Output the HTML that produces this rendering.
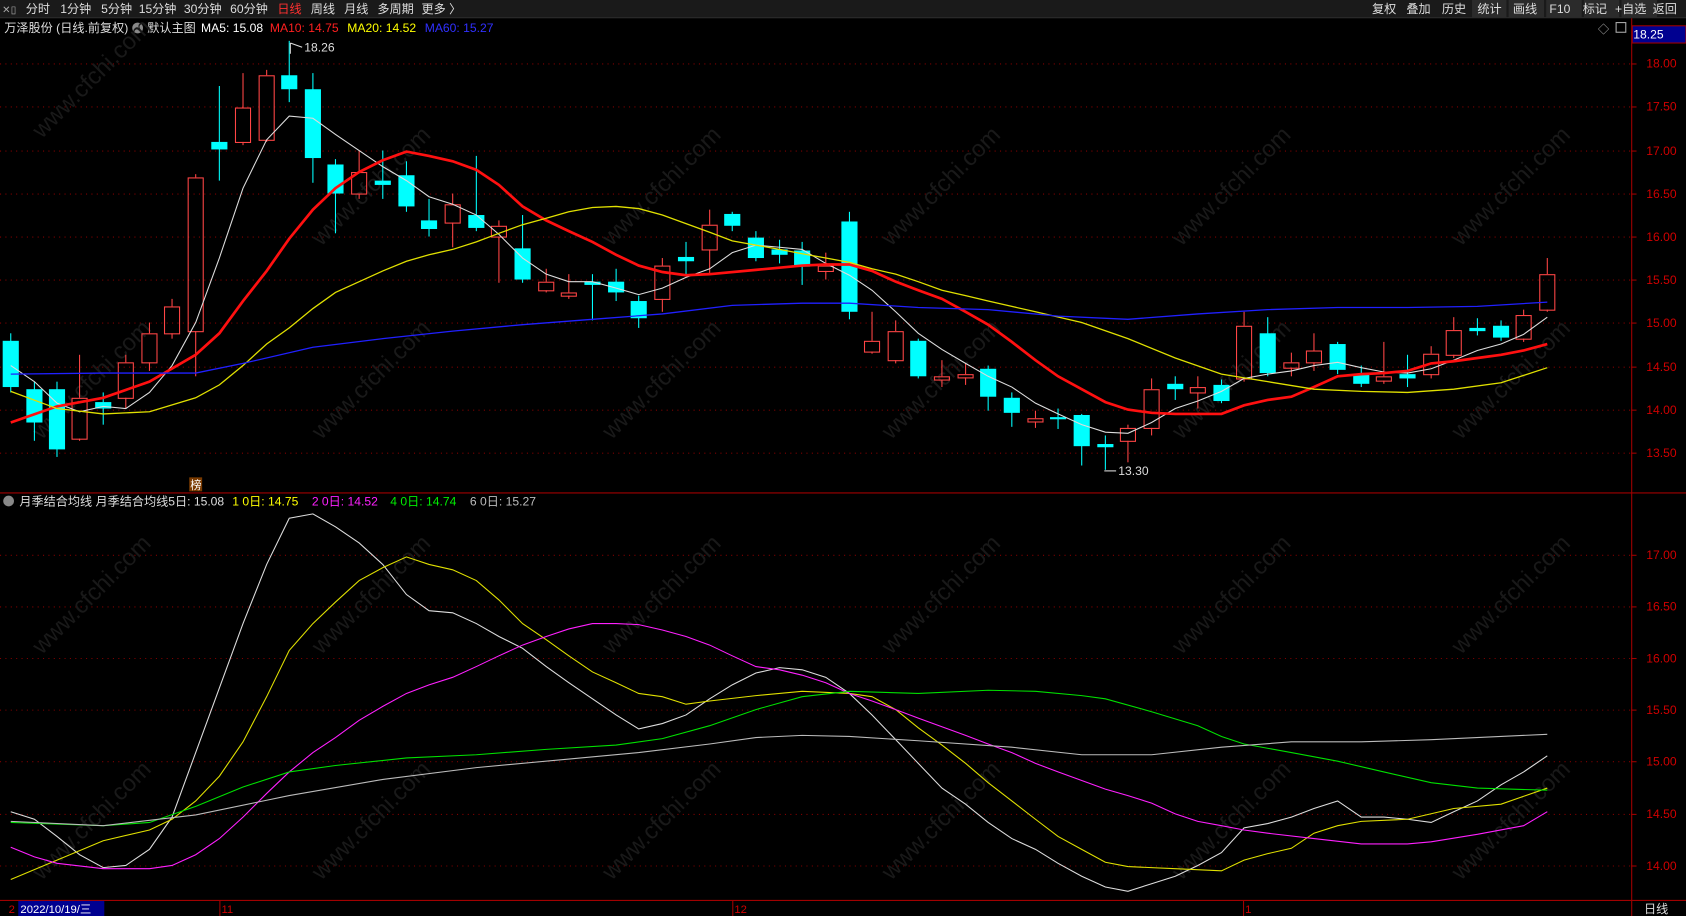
<!DOCTYPE html>
<html><head><meta charset="utf-8">
<style>
html,body{margin:0;padding:0;background:#000;width:1686px;height:916px;overflow:hidden}
svg{display:block}
text{font-family:"Liberation Sans","Noto Sans CJK SC",sans-serif}
</style></head><body>
<svg id="s" width="1686" height="916" viewBox="0 0 1568 852" preserveAspectRatio="none" xmlns="http://www.w3.org/2000/svg">
<rect width="1568" height="852" fill="#000"/>
<rect x="0" y="0" width="1568" height="16" fill="#1a1a1a"/>
<line x1="0" y1="16.5" x2="1568" y2="16.5" stroke="#333"/>
<g font-size="11.3" fill="#ddd">
<text x="2" y="12" fill="#aaa" font-size="9.5">✕▯</text>
<text x="24" y="12">分时</text><text x="56" y="12">1分钟</text><text x="94" y="12">5分钟</text>
<text x="129" y="12">15分钟</text><text x="171" y="12">30分钟</text><text x="214" y="12">60分钟</text>
<text x="258" y="12" fill="#ff3030">日线</text><text x="289" y="12">周线</text><text x="320" y="12">月线</text>
<text x="351" y="12">多周期</text><text x="392" y="12">更多 〉</text>
</g>
<g fill="#2b2b2b">
<rect x="1369" y="0" width="32" height="16"/><rect x="1403" y="0" width="33" height="16"/><rect x="1438" y="0" width="33" height="16"/>
<rect x="1473" y="0" width="33" height="16"/><rect x="1508" y="0" width="33" height="16"/>
</g>
<g font-size="11.3" fill="#ddd">
<text x="1276" y="12">复权</text><text x="1308" y="12">叠加</text><text x="1341" y="12">历史</text><text x="1374" y="12">统计</text>
<text x="1407" y="12">画线</text><text x="1441" y="12">F10</text><text x="1472" y="12">标记</text><text x="1502" y="12">+自选</text><text x="1537" y="12">返回</text>
</g>
<g font-size="11.3">
<text x="4" y="30" fill="#ddd">万泽股份 (日线.前复权)</text>
<circle cx="128" cy="26" r="5" fill="#888"/>
<text x="137" y="30" fill="#ddd">默认主图</text>
<text x="187" y="30" fill="#fff">MA5: 15.08</text>
<text x="251" y="30" fill="#ff2020">MA10: 14.75</text>
<text x="323" y="30" fill="#ffff00">MA20: 14.52</text>
<text x="395" y="30" fill="#3030ff">MA60: 15.27</text>
</g>
<text x="1486" y="31" font-size="10.5" fill="#aaa">◇</text>
<rect x="1503" y="21" width="9" height="9" fill="none" stroke="#aaa"/>
<line x1="1517.5" y1="17" x2="1517.5" y2="838" stroke="#a00000"/>
<line x1="0" y1="458.5" x2="1568" y2="458.5" stroke="#a00000"/>
<line x1="0" y1="837.5" x2="1568" y2="837.5" stroke="#a00000"/>
<rect x="1518" y="24" width="50" height="16" fill="#000090" stroke="#a00000"/>
<text x="1519" y="36" font-size="11.3" fill="#fff">18.25</text>
<g id="grid" stroke="#800000" stroke-dasharray="1,4"></g>
<g id="labels" font-size="11.3" fill="#d00000"></g>
<g id="wm" font-size="22" fill="#191919"></g>
<g id="cd"></g>
<g id="ln" fill="none"></g>
<text x="283" y="48" font-size="11.3" fill="#ddd">18.26</text>
<path d="M270 40 L270 50 M270 40 L281 44" stroke="#ddd" fill="none"/>
<text x="1040" y="442" font-size="11.3" fill="#ddd">13.30</text>
<path d="M1027 438 L1038 438" stroke="#ddd"/>
<rect x="176" y="444" width="12" height="13" fill="#7a3a00"/>
<text x="177" y="455" font-size="10.5" fill="#fff">榜</text>
<g font-size="11.3">
<circle cx="8" cy="466" r="5" fill="#888"/>
<text x="18" y="470" fill="#ddd">月季结合均线 月季结合均线5日: 15.08</text>
<text x="216" y="470" fill="#ffff00">1 0日: 14.75</text>
<text x="290" y="470" fill="#ff20ff">2 0日: 14.52</text>
<text x="363" y="470" fill="#00ee00">4 0日: 14.74</text>
<text x="437" y="470" fill="#bbb">6 0日: 15.27</text>
</g>
<rect x="17" y="838" width="80" height="14" fill="#000090"/>
<text x="8" y="849" font-size="10.5" fill="#d00000">2</text>
<text x="19" y="849" font-size="10.5" fill="#fff">2022/10/19/三</text>
<text x="206" y="849" font-size="10.5" fill="#d00000">11</text>
<text x="683" y="849" font-size="10.5" fill="#d00000">12</text>
<text x="1158" y="849" font-size="10.5" fill="#d00000">1</text>
<line x1="204.5" y1="838" x2="204.5" y2="852" stroke="#a00000"/>
<line x1="681.5" y1="838" x2="681.5" y2="852" stroke="#a00000"/>
<line x1="1156.5" y1="838" x2="1156.5" y2="852" stroke="#a00000"/>
<line x1="1517.5" y1="838" x2="1517.5" y2="852" stroke="#a00000"/>
<text x="1529" y="849" font-size="11.3" fill="#ddd">日线</text>
</svg>
<script>
var NS="http://www.w3.org/2000/svg";
function el(p,t,a,txt){var e=document.createElementNS(NS,t);for(var k in a)e.setAttribute(k,a[k]);if(txt)e.textContent=txt;document.getElementById(p).appendChild(e);return e;}
var mg=[[59,"18.00"],[99,"17.50"],[140,"17.00"],[180,"16.50"],[220,"16.00"],[260,"15.50"],[300,"15.00"],[341,"14.50"],[381,"14.00"],[421,"13.50"]];
var lg=[[516,"17.00"],[564,"16.50"],[612,"16.00"],[660,"15.50"],[708,"15.00"],[757,"14.50"],[805,"14.00"]];
mg.concat(lg).forEach(function(g){el("grid","line",{x1:0,x2:1517,y1:g[0]+.5,y2:g[0]+.5});el("labels","text",{x:1531,y:g[0]+4},g[1]);el("grid","line",{x1:1517,x2:1522,y1:g[0]+.5,y2:g[0]+.5,"stroke-dasharray":"none","stroke":"#a00000"});});
[[0,80],[260,180],[530,180],[790,180],[1060,180],[1320,180],[0,360],[260,360],[530,360],[790,360],[1060,360],[1320,360],[0,560],[260,560],[530,560],[790,560],[1060,560],[1320,560],[0,770],[260,770],[530,770],[790,770],[1060,770],[1320,770]].forEach(function(p){el("wm","text",{x:p[0]+10,y:p[1]+20,transform:"rotate(-45 "+(p[0]+60)+" "+p[1]+")"},"www.cfchi.com");});
var C=[[10,0,317,360,310,365],[32,0,362,393,355,410],[53,0,362,418,355,425],[74,1,370,408,330,410],[96,0,374,380,365,395],[117,1,337,370,330,380],[139,1,310,337,300,345],[160,1,285,310,278,315],[182,1,165,308,162,350],[204,0,132,139,80,168],[226,1,100,132,68,135],[248,1,70,130,65,132],[269,0,70,83,38,95],[291,0,83,147,68,170],[312,0,153,180,148,217],[334,1,160,180,140,185],[356,0,168,172,140,185],[378,0,163,192,150,197],[399,0,205,213,185,220],[421,1,190,207,180,230],[443,0,200,212,145,215],[464,1,210,220,205,263],[486,0,231,260,200,263],[508,1,262,270,250,272],[529,1,272,275,255,278],[551,0,262,265,255,298],[573,0,262,272,250,280],[594,0,280,296,275,305],[616,1,247,278,240,290],[638,0,239,243,225,256],[660,1,209,232,195,255],[681,0,199,210,197,215],[703,0,221,240,215,243],[725,0,232,237,223,245],[746,0,233,248,225,265],[768,1,247,252,235,260],[790,0,206,290,197,297],[811,1,317,327,290,329],[833,1,308,335,298,338],[854,0,317,350,315,352],[876,1,350,353,335,360],[898,1,348,351,338,358],[919,0,343,369,340,382],[941,0,370,384,365,397],[963,1,389,392,382,398],[984,0,388,390,380,399],[1006,0,386,415,385,433],[1028,0,413,416,405,437],[1049,1,398,410,395,430],[1071,1,362,398,352,405],[1093,0,357,362,350,372],[1114,1,360,365,350,380],[1136,0,358,373,353,375],[1157,1,303,352,290,355],[1179,0,310,347,295,350],[1201,1,337,342,328,350],[1222,1,326,337,310,345],[1244,0,320,344,318,348],[1266,0,348,357,340,360],[1287,1,350,354,318,357],[1309,0,348,352,330,360],[1331,1,329,348,322,352],[1352,1,307,330,295,333],[1374,0,305,308,296,312],[1396,0,303,314,298,317],[1417,1,293,315,288,318],[1439,1,255,288,240,290]];
C.forEach(function(c){var x=c[0],w=7.5;if(c[1]){el("cd","line",{x1:x,x2:x,y1:c[4],y2:c[2],stroke:"#ff4545"});el("cd","line",{x1:x,x2:x,y1:c[3],y2:c[5],stroke:"#ff4545"});el("cd","rect",{x:x-w+.5,y:c[2]+.5,width:2*w-1,height:Math.max(c[3]-c[2],1),fill:"none",stroke:"#ff4545"});}else{el("cd","line",{x1:x,x2:x,y1:c[4],y2:c[5],stroke:"#00ffff"});el("cd","rect",{x:x-w,y:c[2],width:2*w,height:Math.max(c[3]-c[2],2),fill:"#00ffff"});}});
function L(col,w,pts){el("ln","polyline",{points:pts,stroke:col,"stroke-width":w});}
L("#ddd",1,"10,340 32,355 53,375 74,383 96,378 117,380 139,365 160,340 182,300 204,240 226,175 248,130 269,108 291,110 312,125 334,140 356,155 378,168 399,183 421,190 443,200 464,218 486,240 508,255 529,262 551,262 573,268 594,274 616,268 638,258 660,250 681,235 703,228 725,230 746,232 768,245 790,256 811,270 833,290 854,310 876,325 898,338 919,350 941,360 963,375 984,385 1006,395 1028,402 1049,403 1071,393 1093,380 1114,373 1136,364 1157,352 1179,348 1201,345 1222,340 1244,337 1266,342 1287,346 1309,347 1331,343 1352,335 1374,326 1396,320 1417,311 1439,295");
L("#ff1010",2.5,"10,393 53,378 96,370 139,355 182,330 204,310 226,280 248,252 269,222 291,195 312,175 334,160 356,149 378,141 399,145 421,150 443,158 464,172 486,192 508,205 529,215 551,225 573,237 594,247 616,253 638,256 660,255 703,251 746,247 768,246 790,246 811,252 833,262 854,270 876,278 898,290 919,302 941,318 963,335 984,350 1006,362 1028,374 1049,381 1071,384 1093,385 1114,385 1136,385 1157,377 1179,372 1201,369 1222,360 1244,350 1266,348 1287,347 1309,345 1331,338 1352,336 1374,333 1396,330 1417,326 1439,320");
L("#e0e000",1.2,"10,364 53,380 96,385 139,383 182,370 204,358 226,340 248,320 269,305 291,287 312,272 334,262 356,252 378,243 399,237 421,232 443,225 464,217 486,209 508,203 529,197 551,193 573,192 594,194 616,200 638,208 660,216 681,224 703,228 725,232 746,236 768,240 790,244 811,250 833,255 854,262 876,270 898,275 919,280 941,285 963,290 1006,300 1049,315 1093,333 1136,348 1179,355 1222,362 1266,364 1309,365 1352,362 1396,356 1439,342");
L("#2020ff",1.2,"10,348 96,347 182,347 226,338 291,323 356,315 421,308 486,302 551,297 616,292 681,284 746,282 790,282 854,286 919,288 984,294 1049,297 1114,292 1179,288 1244,286 1309,286 1374,285 1439,281");
L("#ddd",1,"10,755 32,762 53,778 74,795 96,807 117,805 139,790 160,760 182,700 204,640 226,580 248,525 269,482 291,478 312,490 334,505 356,525 378,553 399,568 421,570 443,580 464,592 486,603 508,620 529,635 551,650 573,665 594,678 616,673 638,665 660,650 681,637 703,626 725,621 746,623 768,630 790,645 811,665 833,688 854,710 876,733 898,748 919,765 941,780 963,790 984,803 1006,815 1028,825 1049,829 1071,822 1093,815 1114,805 1136,793 1157,770 1179,766 1201,760 1222,752 1244,745 1266,760 1287,760 1309,762 1331,765 1352,755 1374,745 1396,730 1417,718 1439,703");
L("#e0e000",1,"10,818 53,800 96,782 139,772 160,762 182,745 204,722 226,690 248,648 269,605 291,580 312,560 334,540 356,528 378,518 399,525 421,530 443,540 464,558 486,580 508,595 529,610 551,625 573,635 594,645 616,648 638,655 660,652 703,647 746,643 790,645 811,648 833,660 854,677 876,693 898,710 919,728 941,745 963,762 984,778 1006,790 1028,802 1049,806 1093,808 1136,810 1157,800 1179,794 1201,789 1222,775 1244,768 1266,764 1309,762 1352,752 1396,748 1439,733");
L("#ff20ff",1,"10,788 32,797 53,803 96,808 139,808 160,805 182,795 204,780 226,760 248,738 269,718 291,700 312,686 334,670 356,657 378,645 399,637 421,630 443,620 464,610 486,600 508,592 529,585 551,580 573,580 594,581 616,586 638,592 660,600 681,610 703,620 725,623 746,628 768,635 790,645 811,652 833,660 854,668 876,676 898,684 919,692 941,700 963,710 984,718 1006,726 1028,734 1049,740 1071,747 1093,757 1114,764 1136,768 1157,772 1179,775 1222,780 1266,785 1309,785 1331,783 1374,776 1417,768 1439,755");
L("#00e000",1,"10,765 96,768 139,765 182,750 226,732 269,718 312,712 378,705 443,702 508,697 573,693 616,687 660,675 703,660 746,648 790,643 854,645 919,642 963,643 1006,647 1028,650 1071,662 1114,675 1136,685 1157,692 1201,700 1244,708 1287,718 1331,728 1374,733 1439,735");
L("#bbb",1,"10,764 96,768 182,758 269,740 356,725 443,714 529,706 594,700 660,692 703,686 746,684 790,685 854,689 941,695 1006,702 1071,702 1136,695 1201,690 1266,690 1331,688 1439,683");
</script>
</body></html>
